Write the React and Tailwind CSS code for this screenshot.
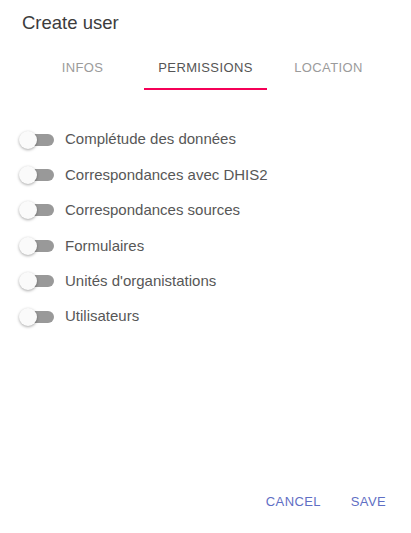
import React, { useState } from 'react';

const permissions = [
    'Complétude des données',
    'Correspondances avec DHIS2',
    'Correspondances sources',
    'Formulaires',
    "Unités d'organistations",
    'Utilisateurs',
];

const tabs = ['INFOS', 'PERMISSIONS', 'LOCATION'];

// Small material-like switch, off by default
function Toggle({ checked, onChange }) {
    return (
        <button
            type="button"
            onClick={onChange}
            className="relative w-[36px] h-[20px] shrink-0 flex items-center"
        >
            <span
                className={`ml-[3px] w-[32px] h-[12px] rounded-full ${checked ? 'bg-[#f48fb1]' : 'bg-[#999999]'}`}
            />
            <span
                className={`absolute top-[1px] w-[18px] h-[18px] rounded-full shadow-[0_1px_3px_rgba(0,0,0,0.35)] ${checked ? 'left-[17px] bg-[#f50057]' : 'left-0 bg-[#fafafa]'}`}
            />
        </button>
    );
}

export default function App() {
    const [activeTab, setActiveTab] = useState(1);
    const [checked, setChecked] = useState({});

    const toggle = (name) => setChecked(prev => ({ ...prev, [name]: !prev[name] }));

    return (
        <div className="w-[411px] h-[533px] bg-white flex flex-col font-['Liberation_Sans',Arial,sans-serif]">
            <div className="h-[45px] pl-[22px] pt-[12px]">
                <h2 className="text-[18.5px] leading-[22px] text-[#3c3c3c]">Create user</h2>
            </div>

            <div className="flex pl-[21px] h-[45px]">
                {tabs.map((tab, i) => (
                    <button
                        key={tab}
                        onClick={() => setActiveTab(i)}
                        className={`relative w-[123px] flex items-center justify-center text-[13px] tracking-[0.37px] ${activeTab === i ? 'text-[#555555]' : 'text-[#9b9b9b]'}`}
                    >
                        {tab}
                        {activeTab === i && (
                            <span className="absolute left-0 right-0 bottom-0 h-[2px] bg-[#f50057]" />
                        )}
                    </button>
                ))}
            </div>

            <div className="flex-1 pt-[32px]">
                {permissions.map(name => (
                    <label key={name} className="h-[35.4px] flex items-center pl-[19px] cursor-pointer">
                        <Toggle checked={!!checked[name]} onChange={() => toggle(name)} />
                        <span className="ml-[10px] text-[15px] text-[#575757]">{name}</span>
                    </label>
                ))}
            </div>

            <div className="flex justify-end items-center gap-[30px] pr-[25px] h-[36px] mb-[13px]">
                <button className="text-[13px] tracking-[0.37px] text-[#5f6fc4]">CANCEL</button>
                <button className="text-[13px] tracking-[0.37px] text-[#5f6fc4]">SAVE</button>
            </div>
        </div>
    );
}
